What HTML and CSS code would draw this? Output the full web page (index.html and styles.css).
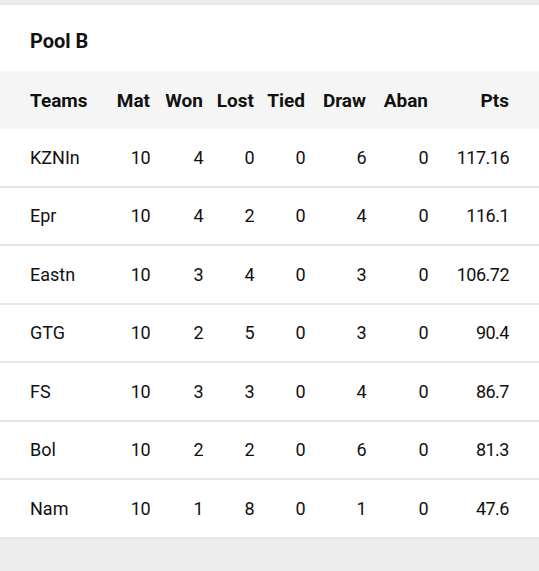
FILE: index.html
```html
<!DOCTYPE html>
<html>
<head>
<meta charset="utf-8">
<link rel="stylesheet" href="styles.css">
</head>
<body>
<div class="card">
  <h2 class="title">Pool B</h2>
  <div class="row head">
    <div class="team">Teams</div><div>Mat</div><div>Won</div><div>Lost</div><div>Tied</div><div>Draw</div><div>Aban</div><div>Pts</div>
  </div>
  <div class="row"><div class="team">KZNIn</div><div>10</div><div>4</div><div>0</div><div>0</div><div>6</div><div>0</div><div>117.16</div></div>
  <div class="row"><div class="team">Epr</div><div>10</div><div>4</div><div>2</div><div>0</div><div>4</div><div>0</div><div>116.1</div></div>
  <div class="row"><div class="team">Eastn</div><div>10</div><div>3</div><div>4</div><div>0</div><div>3</div><div>0</div><div>106.72</div></div>
  <div class="row"><div class="team">GTG</div><div>10</div><div>2</div><div>5</div><div>0</div><div>3</div><div>0</div><div>90.4</div></div>
  <div class="row"><div class="team">FS</div><div>10</div><div>3</div><div>3</div><div>0</div><div>4</div><div>0</div><div>86.7</div></div>
  <div class="row"><div class="team">Bol</div><div>10</div><div>2</div><div>2</div><div>0</div><div>6</div><div>0</div><div>81.3</div></div>
  <div class="row"><div class="team">Nam</div><div>10</div><div>1</div><div>8</div><div>0</div><div>1</div><div>0</div><div>47.6</div></div>
</div>
</body>
</html>
```
FILE: styles.css
```css
html, body {
  margin: 0;
  padding: 0;
  background: #ededed;
}
body {
  font-family: Roboto, "Noto Sans", sans-serif;
  color: #111;
}
.card {
  background: #fff;
  margin-top: 3px;
  border-top: 2px solid #e6e6e6;
}
.title {
  margin: 0;
  height: 66px;
  box-sizing: border-box;
  padding: 24px 30px 0;
  font-size: 20px;
  line-height: 24px;
  font-weight: 700;
}
.row {
  display: grid;
  grid-template-columns: 70px 50px 53px 51px 51px 61px 62px 81px;
  padding: 0 30px;
  height: 58.5px;
  box-sizing: border-box;
  align-items: center;
  font-size: 18px;
  border-bottom: 2px solid #e6e6e6;
}
.row > div {
  text-align: right;
  letter-spacing: -0.5px;
}
.row > .team {
  text-align: left;
  letter-spacing: 0;
}
.head {
  background: #f5f5f5;
  font-weight: 700;
  font-size: 19px;
  height: 58px;
  border-bottom: none;
}
.head > div {
  letter-spacing: 0;
}
```
